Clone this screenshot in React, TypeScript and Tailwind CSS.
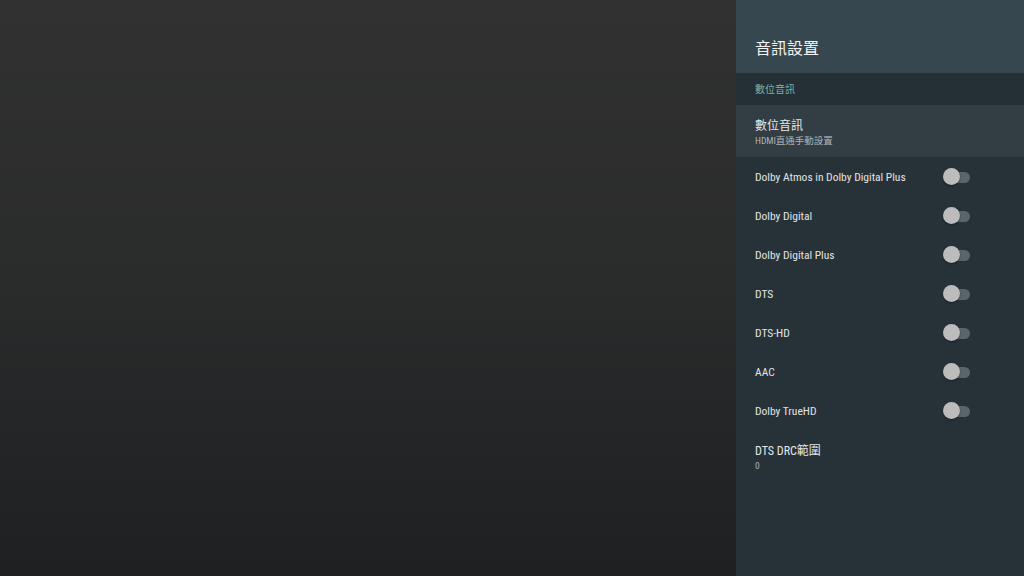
import React from "react";

const FONT = {
  fontFamily:
    '"Roboto Condensed", "Liberation Sans Narrow", Roboto, "Noto Sans CJK TC", sans-serif',
};

const TOGGLES = [
  "Dolby Atmos in Dolby Digital Plus",
  "Dolby Digital",
  "Dolby Digital Plus",
  "DTS",
  "DTS-HD",
  "AAC",
  "Dolby TrueHD",
];

function Toggle() {
  return (
    <div className="relative h-[18px] w-[28px] shrink-0">
      <div className="absolute left-[6px] top-[4px] h-[11px] w-[21px] rounded-full bg-[#5b6569]" />
      <div className="absolute left-0 top-0 h-[17px] w-[17px] rounded-full bg-[#bcbcbc] shadow-[0_1px_2px_rgba(0,0,0,0.4)]" />
    </div>
  );
}

function TwoLine({ title, sub, focused }: { title: string; sub: string; focused?: boolean }) {
  return (
    <div
      className={`flex h-[52px] flex-col justify-center pl-[19px] pt-[4px] ${
        focused ? "bg-[#323e44]" : ""
      }`}
    >
      <div className="text-[12px] leading-[16px] text-[#e6e6e6]">{title}</div>
      <div className="text-[9.5px] leading-[14px] text-[#aeb3b5]">{sub}</div>
    </div>
  );
}

export default function App() {
  return (
    <div className="flex h-[576px] w-[1024px] overflow-hidden" style={FONT}>
      <div className="flex-1 bg-gradient-to-b from-[#313131] via-[#2a2b2b] to-[#1e2022]" />

      <aside className="flex w-[288px] flex-col bg-[#263238]">
        <header className="flex h-[73px] items-center bg-[#37474f] pl-[19px] pt-[25px]">
          <h1 className="text-[16px] font-normal text-[#f2f2f2]">音訊設置</h1>
        </header>

        <div className="flex h-[32px] items-center bg-[#243035] pl-[19px]">
          <span className="text-[10px] text-[#79b4ad]">數位音訊</span>
        </div>

        <TwoLine title="數位音訊" sub="HDMI直通手動設置" focused />

        {TOGGLES.map((t) => (
          <div key={t} className="flex h-[39px] items-center justify-between pl-[19px] pr-[53px]">
            <span className="pt-[2px] text-[11.5px] text-[#e3e3e3]">{t}</span>
            <Toggle />
          </div>
        ))}

        <TwoLine title="DTS DRC範圍" sub="0" />
      </aside>
    </div>
  );
}
